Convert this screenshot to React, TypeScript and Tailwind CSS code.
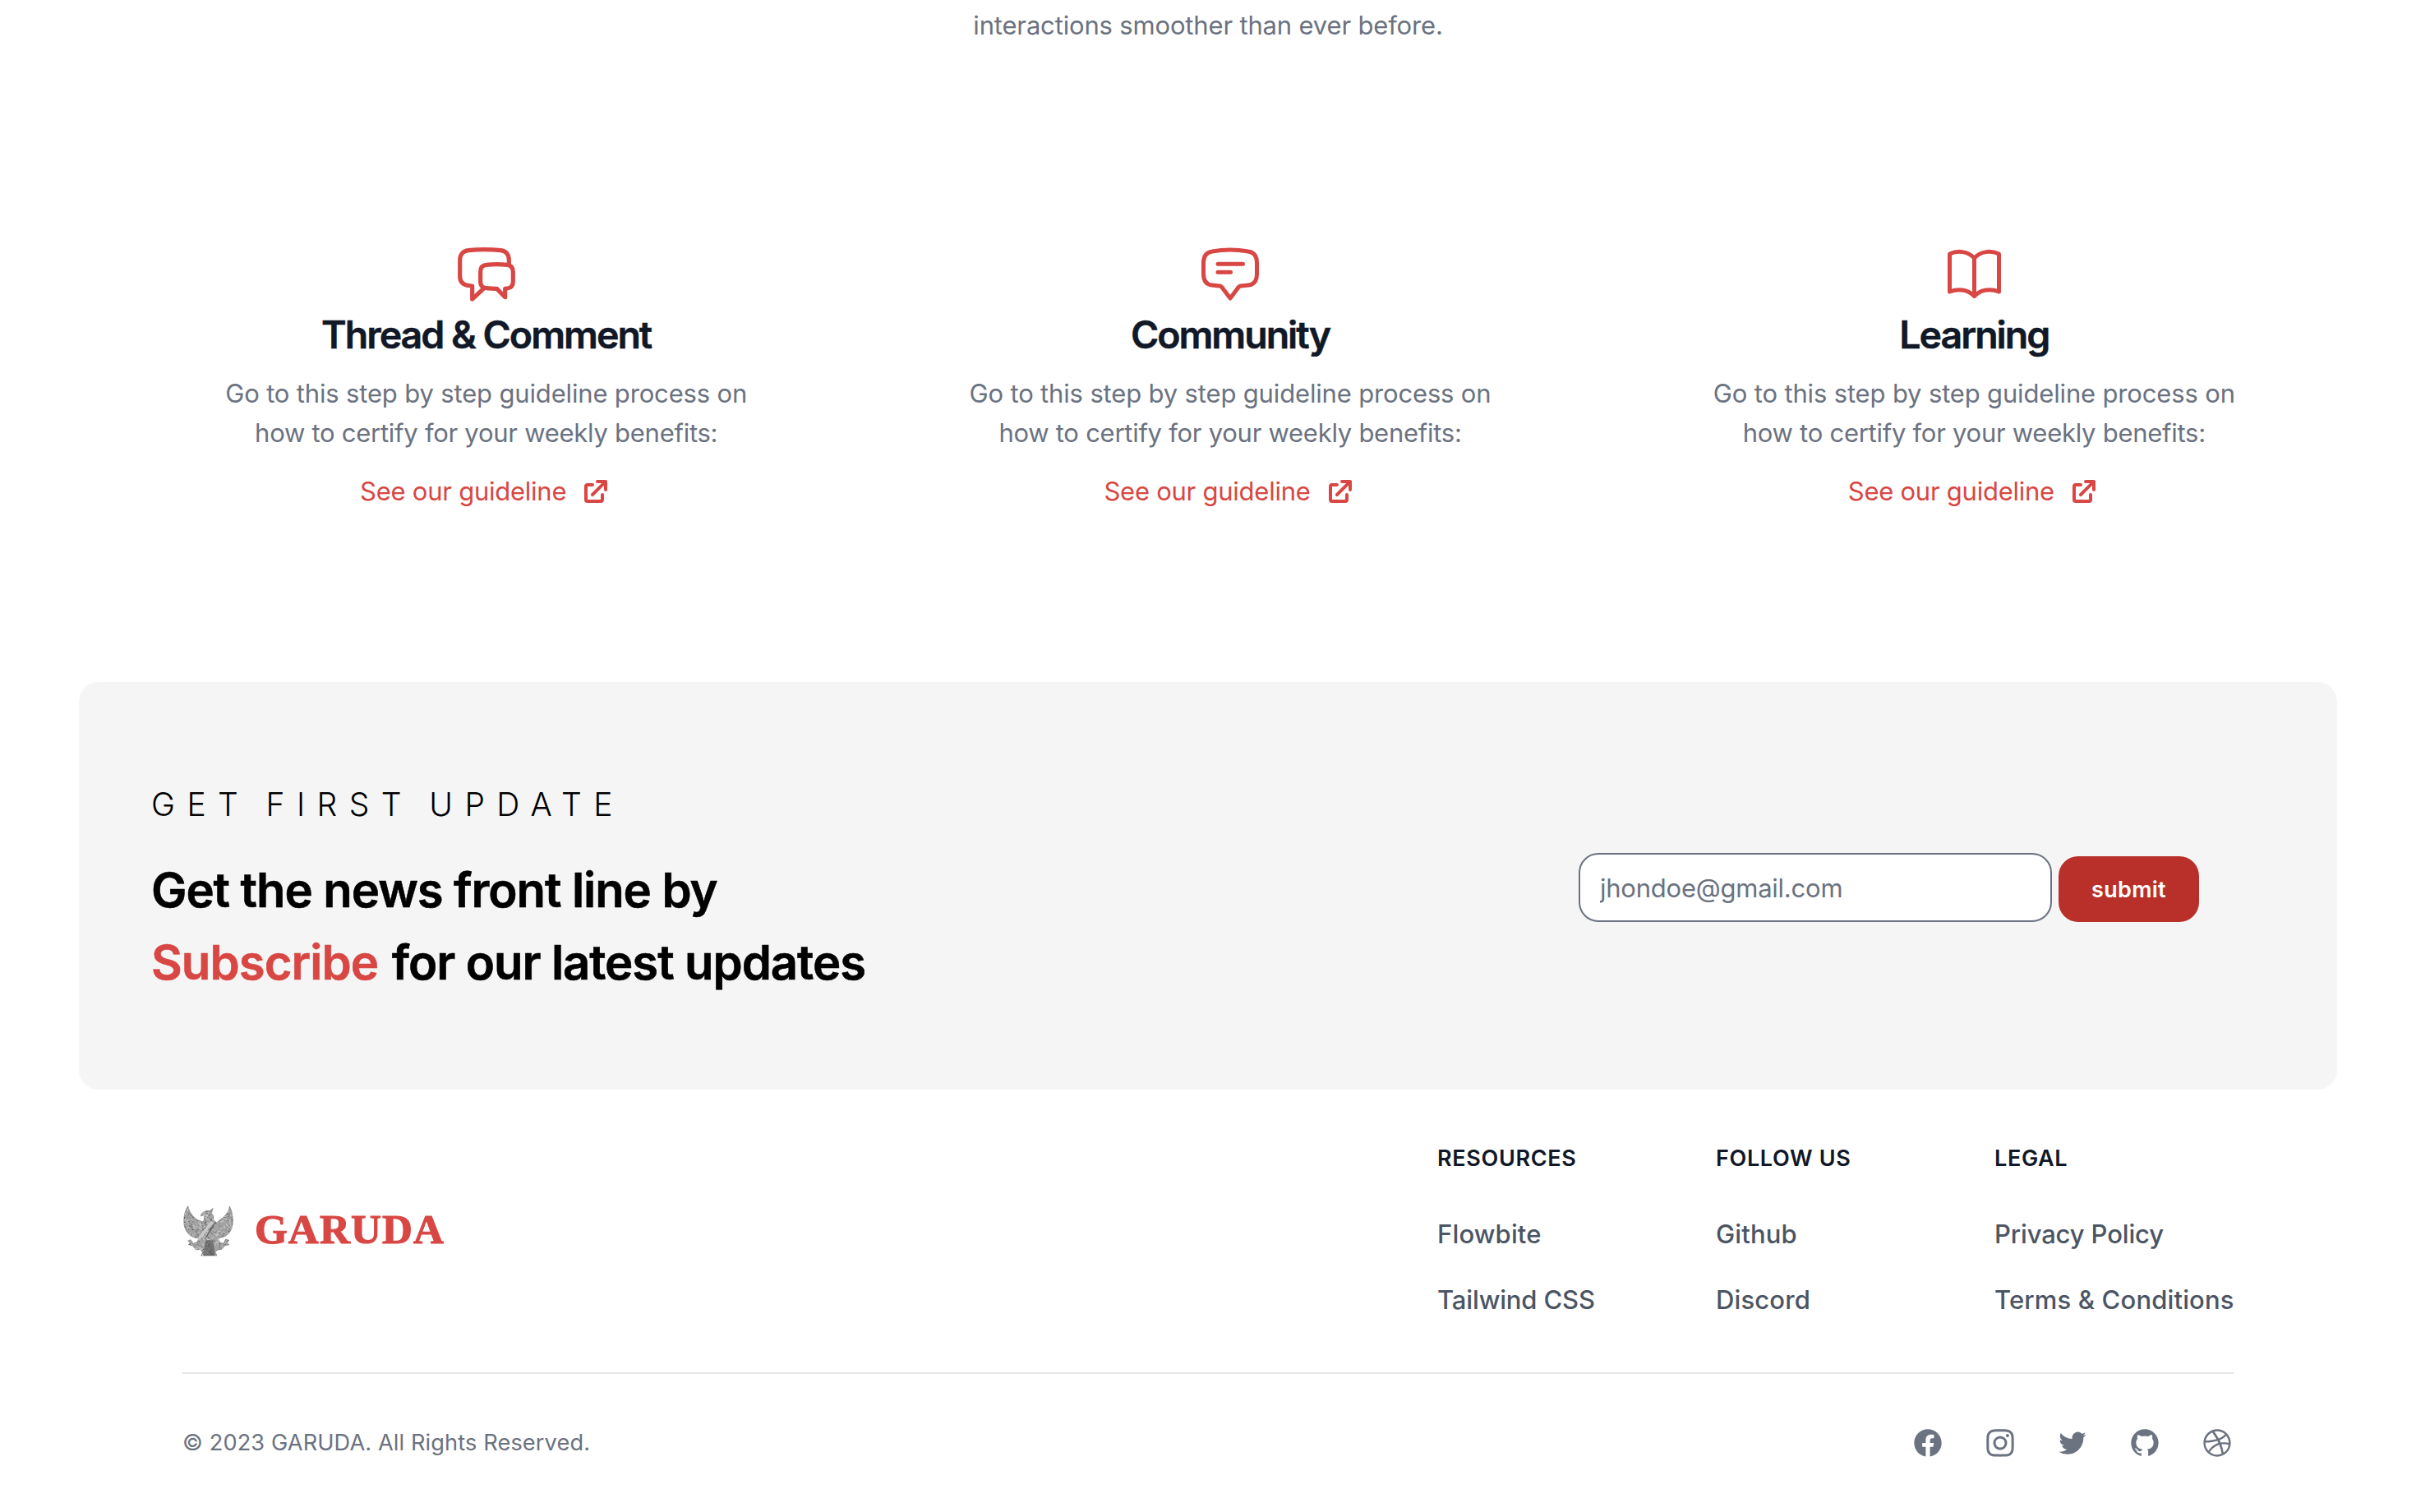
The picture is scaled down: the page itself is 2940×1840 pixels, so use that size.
import type { ReactNode } from "react";

function ThreadIcon() {
  return (
    <svg className="size-20" viewBox="36 18 240 240" fill="none" stroke="currentColor" strokeWidth="15.500" strokeLinejoin="round" strokeLinecap="round">
      <path d="M238 93 V80 C238 60 228 46 208 44 Q148 38 90 44 C70 46 59 60 59 80 V138 C59 158 70 170 90 172.500 L104 174 V222 L145 184" />
      <path d="M156 97 Q194 93 232 97 C246 99 253 108 253 122 V158 C253 173 246 181 232 183 L224 184 V215 L194 184 Q174 184 156 182 C141 181 134 173 134 158 V122 C134 107 142 98 156 97 Z" />
    </svg>
  );
}

function CommunityIcon() {
  return (
    <svg className="size-20" viewBox="0 0 80 80" fill="none" stroke="currentColor" strokeWidth="5" strokeLinejoin="round" strokeLinecap="round">
      <path d="M18 10 Q40 6.200 62 10 C69 11 72.500 16 72.500 24 V37 C72.500 46 69 50.500 62 51 L53 52 C51 52.400 50 53 49 55 L40 67 L31 55 C30 53 29 52.400 27 52 L18 51 C11 50.500 7.500 46 7.500 37 V24 C7.500 16 11 11 18 10 Z" />
      <path d="M25 25.300 H55.500 M25 35.300 H40.500" />
    </svg>
  );
}

function LearningIcon() {
  return (
    <svg className="size-20" viewBox="-0.500 0 80 80" fill="none" stroke="currentColor" strokeWidth="5" strokeLinejoin="round">
      <path d="M10 13 C20 8.500 32 9.500 40 18 C48 9.500 60 8.500 70 13 V59 C60 55 48 56 40 64.500 C32 56 20 55 10 59 Z" />
      <path d="M40 18 V64" />
    </svg>
  );
}

function ExternalIcon() {
  return (
    <svg className="ml-4 size-10" viewBox="0 0 20 20" fill="currentColor">
      <path d="M11 3a1 1 0 100 2h2.586l-6.293 6.293a1 1 0 101.414 1.414L15 6.414V9a1 1 0 102 0V4a1 1 0 00-1-1h-5z" />
      <path d="M5 5a2 2 0 00-2 2v8a2 2 0 002 2h8a2 2 0 002-2v-3a1 1 0 10-2 0v3H5V7h3a1 1 0 000-2H5z" />
    </svg>
  );
}

const EAGLE =
  "M50 35 C36 56 32 88 38 112 C46 138 66 153 90 152 L84 166 L70 172 L60 158 L50 162 L58 170 L52 176 L68 180 L78 194 L96 194 L104 204 L98 216 H156 L150 203 L158 195 L174 193 L184 180 L200 176 L192 170 L200 160 L188 156 L180 172 L166 168 L160 152 C186 150 206 136 212 108 C217 84 212 54 202 36 C200 62 178 78 154 96 L142 84 C146 74 142 66 136 62 L141 43 L132 52 L120 52 C108 54 98 62 97 72 L108 68 C112 76 110 84 106 93 C82 88 58 70 50 35 Z";

const SPECKS = Array.from({ length: 620 }, (_, i) => {
  const r = (n: number) => {
    const v = Math.sin((i + 1) * n) * 43758.5453;
    return v - Math.floor(v);
  };
  return { x: 34 + r(12.9898) * 182, y: 34 + r(78.233) * 184, dx: r(3.71) * 8 - 4, dy: r(9.17) * 8 - 4, c: r(5.37) };
});

function GarudaEmblem() {
  return (
    <svg className="size-16" viewBox="30 30 192 192">
      <clipPath id="eagle">
        <path d={EAGLE} />
      </clipPath>
      <path d={EAGLE} fill="#a3a3a3" stroke="#7c7c7c" strokeWidth="2" />
      <g clipPath="url(#eagle)" strokeWidth="3" strokeLinecap="round">
        {SPECKS.map((s, i) => (
          <path key={i} d={`M${s.x} ${s.y} l${s.dx} ${s.dy}`} stroke={s.c < 0.3 ? "#585858" : s.c < 0.6 ? "#828282" : "#dadada"} />
        ))}
        <path d="M114 160 L106 216 H150 L142 160 Z" fill="#404040" fillOpacity="0.5" />
        <path d="M136 96 L92 152" stroke="#c8c8c8" strokeWidth="11" />
        <path d="M150 94 L116 150" stroke="#5c5c5c" strokeWidth="4" />
      </g>
    </svg>
  );
}

const FEATURES: { title: string; icon: ReactNode }[] = [
  { title: "Thread & Comment", icon: <ThreadIcon /> },
  { title: "Community", icon: <CommunityIcon /> },
  { title: "Learning", icon: <LearningIcon /> },
];

const LINKS = [
  { title: "RESOURCES", items: ["Flowbite", "Tailwind CSS"] },
  { title: "FOLLOW US", items: ["Github", "Discord"] },
  { title: "LEGAL", items: ["Privacy Policy", "Terms & Conditions"] },
];

const SOCIAL = [
  "M22 12c0-5.523-4.477-10-10-10S2 6.477 2 12c0 4.991 3.657 9.128 8.438 9.878v-6.987h-2.540V12h2.540V9.797c0-2.506 1.492-3.890 3.777-3.890 1.094 0 2.238.195 2.238.195v2.460h-1.260c-1.243 0-1.630.771-1.630 1.562V12h2.773l-.443 2.890h-2.330v6.988C18.343 21.128 22 16.991 22 12z",
  "M12.315 2c2.430 0 2.784.013 3.808.060 1.064.049 1.791.218 2.427.465a4.902 4.902 0 011.772 1.153 4.902 4.902 0 011.153 1.772c.247.636.416 1.363.465 2.427.048 1.067.060 1.407.060 4.123v.080c0 2.643-.012 2.987-.060 4.043-.049 1.064-.218 1.791-.465 2.427a4.902 4.902 0 01-1.153 1.772 4.902 4.902 0 01-1.772 1.153c-.636.247-1.363.416-2.427.465-1.067.048-1.407.060-4.123.060h-.080c-2.643 0-2.987-.012-4.043-.060-1.064-.049-1.791-.218-2.427-.465a4.902 4.902 0 01-1.772-1.153 4.902 4.902 0 01-1.153-1.772c-.247-.636-.416-1.363-.465-2.427-.047-1.024-.060-1.379-.060-3.808v-.630c0-2.430.013-2.784.060-3.808.049-1.064.218-1.791.465-2.427a4.902 4.902 0 011.153-1.772A4.902 4.902 0 015.450 2.525c.636-.247 1.363-.416 2.427-.465C8.901 2.013 9.256 2 11.685 2h.630zm-.081 1.802h-.468c-2.456 0-2.784.011-3.807.058-.975.045-1.504.207-1.857.344-.467.182-.800.398-1.150.748-.350.350-.566.683-.748 1.150-.137.353-.300.882-.344 1.857-.047 1.023-.058 1.351-.058 3.807v.468c0 2.456.011 2.784.058 3.807.045.975.207 1.504.344 1.857.182.466.399.800.748 1.150.350.350.683.566 1.150.748.353.137.882.300 1.857.344 1.054.048 1.370.058 4.041.058h.080c2.597 0 2.917-.010 3.960-.058.976-.045 1.505-.207 1.858-.344.466-.182.800-.398 1.150-.748.350-.350.566-.683.748-1.150.137-.353.300-.882.344-1.857.048-1.055.058-1.370.058-4.041v-.080c0-2.597-.010-2.917-.058-3.960-.045-.976-.207-1.505-.344-1.858a3.097 3.097 0 00-.748-1.150 3.098 3.098 0 00-1.150-.748c-.353-.137-.882-.300-1.857-.344-1.023-.047-1.351-.058-3.807-.058zM12 6.865a5.135 5.135 0 110 10.270 5.135 5.135 0 010-10.270zm0 1.802a3.333 3.333 0 100 6.666 3.333 3.333 0 000-6.666zm5.338-3.205a1.200 1.200 0 110 2.400 1.200 1.200 0 010-2.400z",
  "M8.290 20.251c7.547 0 11.675-6.253 11.675-11.675 0-.178 0-.355-.012-.530A8.348 8.348 0 0022 5.920a8.190 8.190 0 01-2.357.646 4.118 4.118 0 001.804-2.270 8.224 8.224 0 01-2.605.996 4.107 4.107 0 00-6.993 3.743 11.650 11.650 0 01-8.457-4.287 4.106 4.106 0 001.270 5.477A4.072 4.072 0 012.800 9.713v.052a4.105 4.105 0 003.292 4.022 4.095 4.095 0 01-1.853.070 4.108 4.108 0 003.834 2.850A8.233 8.233 0 012 18.407a11.616 11.616 0 006.290 1.840",
  "M12 2C6.477 2 2 6.484 2 12.017c0 4.425 2.865 8.180 6.839 9.504.500.092.682-.217.682-.483 0-.237-.008-.868-.013-1.703-2.782.605-3.369-1.343-3.369-1.343-.454-1.158-1.110-1.466-1.110-1.466-.908-.620.069-.608.069-.608 1.003.070 1.531 1.032 1.531 1.032.892 1.530 2.341 1.088 2.910.832.092-.647.350-1.088.636-1.338-2.220-.253-4.555-1.113-4.555-4.951 0-1.093.390-1.988 1.029-2.688-.103-.253-.446-1.272.098-2.650 0 0 .840-.270 2.750 1.026A9.564 9.564 0 0112 6.844c.850.004 1.705.115 2.504.337 1.909-1.296 2.747-1.027 2.747-1.027.546 1.379.202 2.398.100 2.651.640.700 1.028 1.595 1.028 2.688 0 3.848-2.339 4.695-4.566 4.943.359.309.678.920.678 1.855 0 1.338-.012 2.419-.012 2.747 0 .268.180.580.688.482A10.019 10.019 0 0022 12.017C22 6.484 17.522 2 12 2z",
  "M12 2C6.480 2 2 6.480 2 12s4.480 10 10 10c5.510 0 10-4.480 10-10S17.510 2 12 2zm6.605 4.610a8.502 8.502 0 011.930 5.314c-.281-.054-3.101-.629-5.943-.271-.065-.141-.120-.293-.184-.445a25.416 25.416 0 00-.564-1.236c3.145-1.280 4.577-3.124 4.761-3.362zM12 3.475c2.170 0 4.154.813 5.662 2.148-.152.216-1.443 1.941-4.480 3.080-1.399-2.570-2.950-4.675-3.189-5A8.687 8.687 0 0112 3.475zm-3.633.803a53.896 53.896 0 013.167 4.935c-3.992 1.063-7.517 1.040-7.896 1.040a8.581 8.581 0 014.729-5.975zM3.453 12.010v-.260c.370.010 4.512.065 8.775-1.215.250.477.477.965.694 1.453-.109.033-.228.065-.336.098-4.404 1.420-6.747 5.303-6.942 5.629a8.522 8.522 0 01-2.190-5.705zM12 20.547a8.482 8.482 0 01-5.239-1.800c.152-.315 1.888-3.656 6.703-5.337.022-.010.033-.010.054-.022a35.318 35.318 0 011.823 6.475 8.400 8.400 0 01-3.341.684zm4.761-1.465c-.086-.520-.542-3.015-1.659-6.084 2.679-.423 5.022.271 5.314.369a8.468 8.468 0 01-3.655 5.715z",
];

export default function App() {
  return (
    <div className="h-[1840px] w-[2940px] overflow-hidden bg-white pt-[7px] font-['Inter',sans-serif] text-[31px] leading-[48px]">
      <p className="text-center tracking-[-0.165px] text-[#6b7280]">interactions smoother than ever before.</p>

      <section className="mt-[241px] ml-[139px] grid w-[2716px] grid-cols-3 text-center">
        {FEATURES.map((f) => (
          <div key={f.title} className="flex flex-col items-center">
            <div className="text-[#d84743]">{f.icon}</div>
            <h5 className="text-[46.5px] leading-[62px] font-semibold tracking-[-2px] text-[#111827] [-webkit-text-stroke:0.5px_#111827]">{f.title}</h5>
            <p className="mt-[17px] text-[#6b7280]">
              <span className="block tracking-[-0.16px]">Go to this step by step guideline process on</span>
              <span className="block tracking-[-0.266px]">how to certify for your weekly benefits:</span>
            </p>
            <a className="mt-[23px] flex items-center tracking-[-0.25px] text-[#d84743]">
              See our guideline
              <ExternalIcon />
            </a>
          </div>
        ))}
      </section>

      <section className="mx-24 mt-52 flex h-[496px] justify-between rounded-3xl bg-[#f5f5f5] pr-[168px] pl-22 text-black">
        <div className="pt-[121px]">
          <h4 className="text-[39px] leading-[56px] font-light tracking-[14.4px] [word-spacing:-6px]">GET FIRST UPDATE</h4>
          <h2 className="mt-8 text-[58px] leading-[88px] font-semibold tracking-[-1.06px] [-webkit-text-stroke:0.6px_currentColor]">
            Get the news front line by
            <br />
            <span className="mr-[3px] tracking-[-0.9px] text-[#d84743]">Subscribe</span> for our latest updates
          </h2>
        </div>
        <form className="flex items-end gap-2 self-start pt-[208px]">
          <input
            type="email"
            placeholder="jhondoe@gmail.com"
            className="h-[84px] w-[576px] rounded-3xl border-2 border-[#6b7280] bg-white px-6 tracking-[-0.234px] placeholder:text-[#6b7280]"
          />
          <button type="button" className="h-20 w-[171px] rounded-3xl bg-[#b83029] pt-px text-[27px] font-semibold tracking-[0.28px] text-white">
            submit
          </button>
        </form>
      </section>

      <footer className="mx-[222px] mt-16">
        <div className="flex items-center justify-between">
          <div className="flex items-center gap-6">
            <GarudaEmblem />
            <span className="pb-1 font-['Liberation_Serif',serif] text-[51px] leading-[60px] font-bold tracking-[1.2px] text-[#d84743] [-webkit-text-stroke:1.2px_#d84743]">GARUDA</span>
          </div>
          <div className="grid grid-cols-[291px_291px_291px] gap-12">
            {LINKS.map((c) => (
              <div key={c.title}>
                <h2 className="text-[27px] leading-10 font-semibold tracking-[0.66px] text-[#111827]">{c.title}</h2>
                <ul className="mt-12 flex flex-col gap-8 font-medium whitespace-nowrap text-[#4b5563]">
                  {c.items.map((t) => (
                    <li key={t} className={t === "Privacy Policy" || t === "Tailwind CSS" ? "tracking-[-0.14px]" : "tracking-[0.15px]"}>
                      {t}
                    </li>
                  ))}
                </ul>
              </div>
            ))}
          </div>
        </div>
        <hr className="mt-16 border-t-2 border-[#e5e7eb]" />
        <div className="mt-16 flex h-10 items-center justify-between text-[#6b7280]">
          <span className="text-[27.2px] tracking-[0.11px]">© 2023 GARUDA. All Rights Reserved.</span>
          <div className="flex gap-12">
            {SOCIAL.map((d, i) => (
              <svg key={i} className="size-10" viewBox="0 0 24 24" fill="currentColor">
                <path fillRule="evenodd" clipRule="evenodd" d={d} />
              </svg>
            ))}
          </div>
        </div>
      </footer>
    </div>
  );
}
